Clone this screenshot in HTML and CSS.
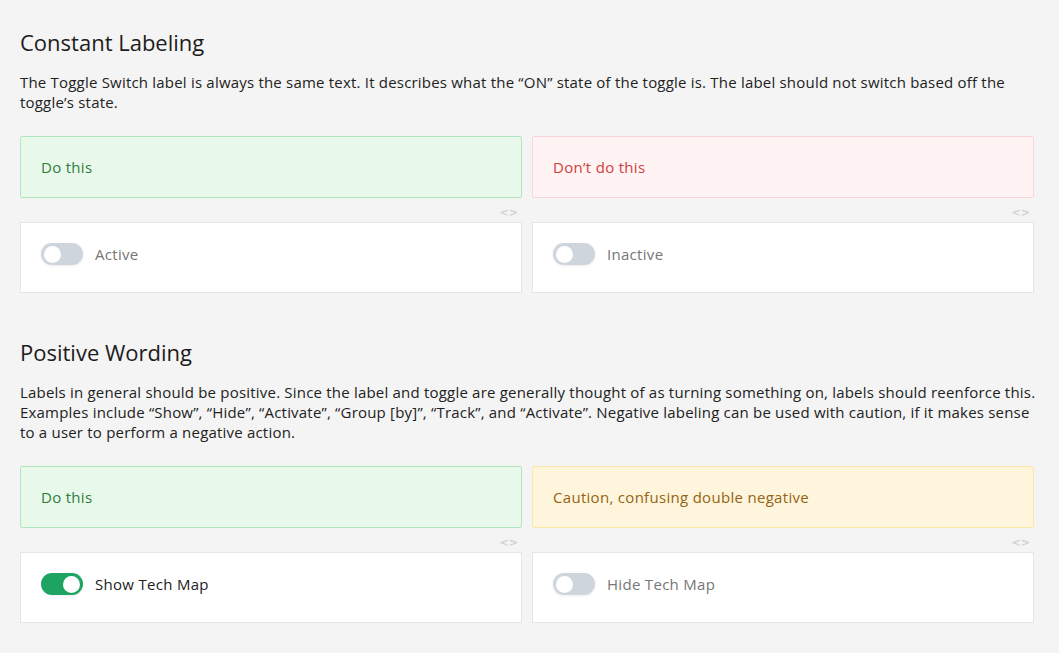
FILE: index.html
```html
<!DOCTYPE html>
<html lang="en">
<head>
<meta charset="utf-8">
<title>Toggle Switch Labeling</title>
<link rel="stylesheet" href="styles.css">
</head>
<body>
<main class="page">
  <section class="section">
    <h2 class="title">Constant Labeling</h2>
    <p class="desc">The Toggle Switch label is always the same text. It describes what the “ON” state of the toggle is. The label should not switch based off the toggle’s state.</p>
    <div class="grid">
      <div class="example">
        <div class="banner banner-do">Do this</div>
        <div class="code-toggle">&lt;&gt;</div>
        <div class="card">
          <span class="switch"><span class="knob"></span></span>
          <span class="label">Active</span>
        </div>
      </div>
      <div class="example">
        <div class="banner banner-dont">Don’t do this</div>
        <div class="code-toggle">&lt;&gt;</div>
        <div class="card">
          <span class="switch"><span class="knob"></span></span>
          <span class="label">Inactive</span>
        </div>
      </div>
    </div>
  </section>
  <section class="section">
    <h2 class="title">Positive Wording</h2>
    <p class="desc">Labels in general should be positive. Since the label and toggle are generally thought of as turning something on, labels should reenforce this. Examples include “Show”, “Hide”, “Activate”, “Group [by]”, “Track”, and “Activate”. Negative labeling can be used with caution, if it makes sense to a user to perform a negative action.</p>
    <div class="grid">
      <div class="example">
        <div class="banner banner-do">Do this</div>
        <div class="code-toggle">&lt;&gt;</div>
        <div class="card">
          <span class="switch switch-on"><span class="knob"></span></span>
          <span class="label label-on">Show Tech Map</span>
        </div>
      </div>
      <div class="example">
        <div class="banner banner-caution">Caution, confusing double negative</div>
        <div class="code-toggle">&lt;&gt;</div>
        <div class="card">
          <span class="switch"><span class="knob"></span></span>
          <span class="label">Hide Tech Map</span>
        </div>
      </div>
    </div>
  </section>
</main>
</body>
</html>
```

FILE: styles.css
```css
* { box-sizing: border-box; }
html, body { margin: 0; padding: 0; }
body {
  background: #f4f4f4;
  font-family: "Open Sans", "Noto Sans", Lato, sans-serif;
  color: #1f1f1f;
}
.page {
  padding: 26px 18px 0 20px;
  width: 1059px;
}
.section { margin-bottom: 43px; }
.title {
  font-size: 22px;
  font-weight: 400;
  margin: 0 0 14px 0;
  line-height: 32px;
  color: #1c1c1c;
}
.desc {
  font-size: 15px;
  letter-spacing: 0.2px;
  line-height: 20px;
  margin: 0 0 24px 0;
  color: #222;
}
.grid {
  display: grid;
  grid-template-columns: 502px 502px;
  column-gap: 10px;
}
.banner {
  height: 62px;
  border: 1px solid;
  border-radius: 2px;
  padding: 0 20px;
  display: flex;
  align-items: center;
  font-size: 15px;
  letter-spacing: 0.3px;
}
.banner-do { background: #e8f8ea; border-color: #b2e6bf; color: #2f7d3e; }
.banner-dont { background: #fff3f3; border-color: #fbd4d6; color: #d0403f; }
.banner-caution { background: #fff5dd; border-color: #fde7a6; color: #946411; }
.code-toggle {
  height: 24px;
  text-align: right;
  padding-right: 4px;
  font-family: "DejaVu Sans", sans-serif;
  font-size: 11px;
  line-height: 30px;
  font-weight: 700;
  color: #d2d2d2;
  letter-spacing: 0;
}
.card {
  height: 71px;
  background: #fff;
  border: 1px solid #e6e6e6;
  display: flex;
  align-items: center;
  padding: 0 20px 7px 20px;
  gap: 12px;
}
.switch {
  width: 42px;
  height: 22px;
  border-radius: 11px;
  background: #cfd5dc;
  display: flex;
  align-items: center;
  padding: 0 3px;
  box-shadow: 0 1px 3px rgba(0,0,0,0.08);
}
.switch-on { background: #1da462; justify-content: flex-end; }
.knob {
  width: 17px;
  height: 17px;
  border-radius: 50%;
  background: #fff;
}
.label {
  font-size: 15px;
  letter-spacing: 0.3px;
  color: #767676;
}
.label-on { color: #222; }
```
